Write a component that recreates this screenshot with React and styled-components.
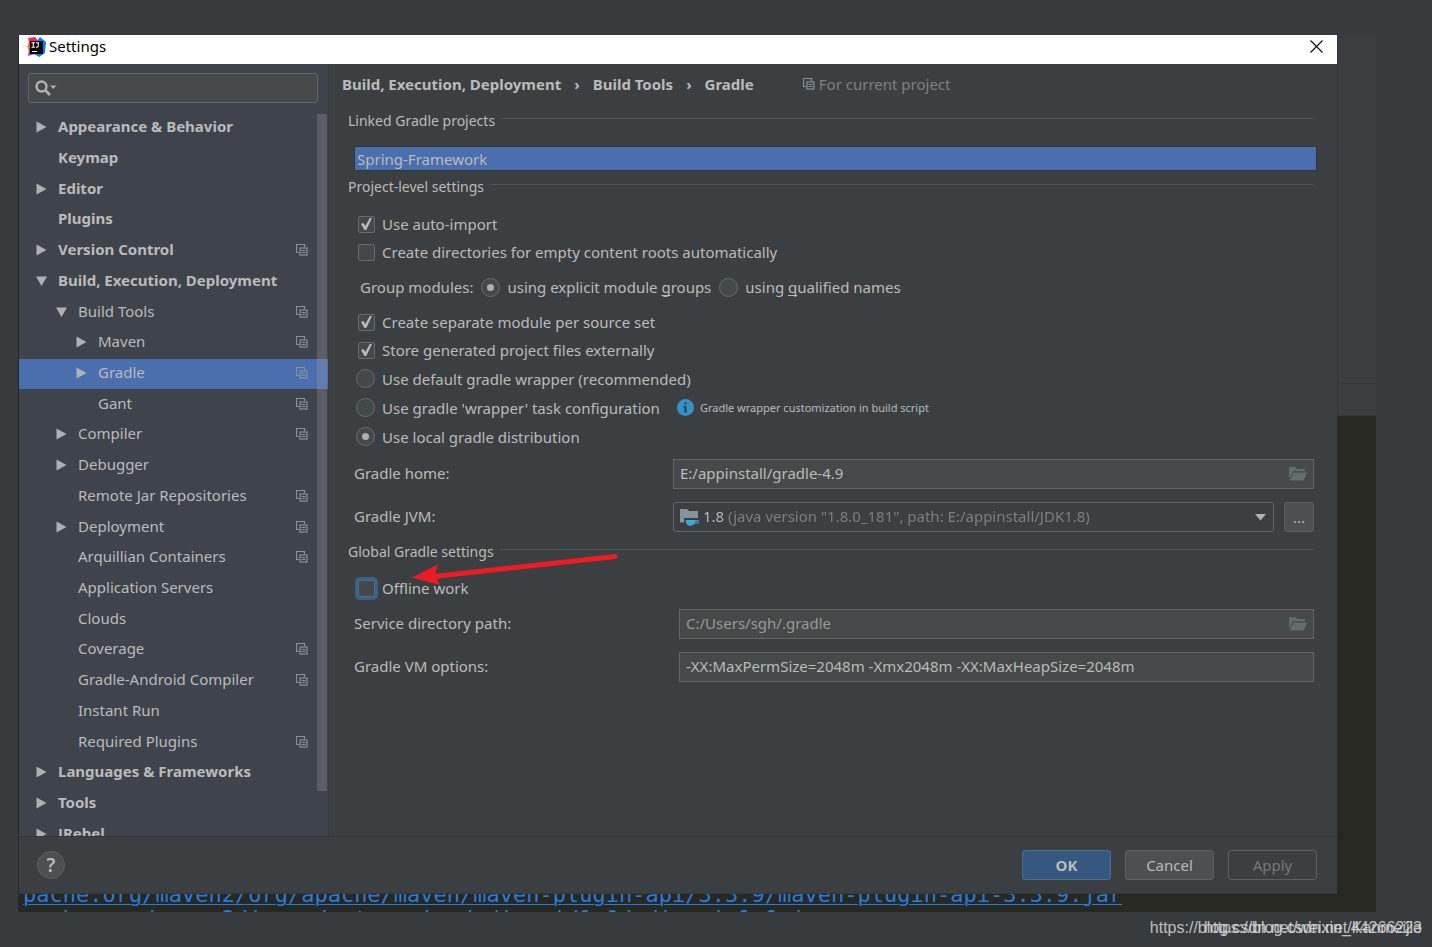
import { useState } from 'react'
import styled, { createGlobalStyle, css } from 'styled-components'

const GlobalStyle = createGlobalStyle`
  * {
    box-sizing: border-box;
  }

  body {
    margin: 0;
    background: #373b3e;
    color: #bbbbbb;
    font-family: 'Noto Sans', 'Open Sans', sans-serif;
    font-size: 15px;
    line-height: 20px;
  }

  button,
  input,
  select {
    font: inherit;
    color: inherit;
    margin: 0;
  }
`

const Desktop = styled.div`
  display: grid;
  grid-template-rows: minmax(0, 1fr) 35px;
  height: 100vh;
  padding: 35px 0 0 18px;
  overflow: hidden;
`

const Screen = styled.div`
  display: grid;
  grid-template-columns: minmax(0, 1fr) 39px;
  grid-template-rows: minmax(0, 1fr) 18px;
  margin-right: 56px;
  background: #272822;
`

const EditorStrip = styled.div`
  display: flex;
  flex-direction: column;
`

const StripPanel = styled.div`
  height: ${(props) => props.$height};
  background: #3c3f41;
  border-left: 1px solid #333537;
  border-bottom: 1px solid #353637;
`

const CodeView = styled.div`
  grid-column: 1 / -1;
  overflow: hidden;
`

const CodeLines = styled.div`
  margin-top: -11px;
  padding-left: 5px;
  font-family: 'DejaVu Sans Mono', monospace;
  font-size: 22px;
  line-height: 24px;
  white-space: pre;
`

const CodeLink = styled.a`
  display: block;
  color: #287bde;
  text-decoration: underline;
  text-decoration-thickness: 1px;
  text-underline-offset: 2px;
`

const Watermark = styled.div`
  display: grid;
  justify-items: end;
  align-items: center;
  padding: 0 10px 3px 0;
  font-family: 'Liberation Sans', Arial, sans-serif;
  font-size: 16px;
  color: rgba(225, 225, 225, 0.8);

  span {
    grid-area: 1 / 1;
  }
`

/* dialog */

const Dialog = styled.div`
  display: flex;
  flex-direction: column;
  margin-left: 1px;
  background: #3c3f41;
  border-bottom: 1px solid #343638;
`

const TitleBar = styled.header`
  display: flex;
  align-items: center;
  flex: 0 0 29px;
  padding: 0 14px 6px 8px;
  gap: 3px;
  background: #ffffff;
  color: #000000;
`

const Title = styled.h1`
  flex: 1;
  margin: 0;
  padding-bottom: 2px;
  font-size: 15px;
  font-weight: 400;
`

const CloseButton = styled.button`
  display: flex;
  padding: 0;
  border: 0;
  background: none;
`

const Body = styled.div`
  display: grid;
  grid-template-columns: 310px minmax(0, 1fr);
  flex: 1;
  min-height: 0;
`

const Sidebar = styled.aside`
  position: relative;
  display: flex;
  flex-direction: column;
  min-height: 0;
  background: #3f434c;
  border-right: 1px solid #37393c;
`

const SearchBox = styled.label`
  display: flex;
  align-items: center;
  flex: 0 0 30px;
  margin: 9px 10px 10px 9px;
  padding: 0 6px;
  background: #45494a;
  border: 1px solid #646464;
  border-radius: 3px;

  input {
    flex: 1;
    min-width: 0;
    border: 0;
    outline: 0;
    background: none;
  }
`

const TreeViewport = styled.div`
  flex: 1;
  min-height: 0;
  overflow: hidden;
`

const Tree = styled.ul`
  display: grid;
  grid-auto-rows: 1fr;
  height: calc(100% + 14px);
  margin: 0;
  padding: 0;
  list-style: none;
`

const TreeItem = styled.li`
  display: flex;
  align-items: center;
  padding: 0 20px 2px ${(props) => 17 + props.$level * 20}px;
  cursor: default;

  ${(props) =>
    props.$level === 0 &&
    css`
      font-weight: 700;
    `}

  ${(props) =>
    props.$selected &&
    css`
      background: #4b6eaf;
    `}
`

const Twisty = styled.span`
  display: flex;
  flex: 0 0 22px;
`

const TreeLabel = styled.span`
  flex: 1;
  padding-bottom: 2px;
  white-space: nowrap;
`

const ScrollThumb = styled.div`
  position: absolute;
  top: 50px;
  right: 1px;
  bottom: 45px;
  width: 10px;
  background: rgba(166, 166, 166, 0.28);
`

const Content = styled.main`
  padding: 0 23px 0 19px;
`

const Crumbs = styled.nav`
  display: flex;
  align-items: center;
  gap: 13px;
  height: 40px;
  margin-left: -6px;
  font-weight: 700;
`

const ScopeNote = styled.span`
  display: flex;
  align-items: center;
  gap: 4px;
  margin-left: 36px;
  color: #808080;
  font-weight: 400;
`

const SectionTitle = styled.h2`
  display: flex;
  align-items: center;
  gap: 6px;
  height: 22px;
  margin: ${(props) => props.$top}px 0 0;
  font-size: 14px;
  font-weight: 400;
  white-space: nowrap;

  &::after {
    content: '';
    flex: 1;
    height: 1px;
    margin-bottom: 5px;
    background: #515354;
  }
`

const ProjectList = styled.ul`
  margin: 14px -3px 0 6px;
  padding: 0;
  list-style: none;
  border: 1px solid #323435;

  li {
    height: 23px;
    padding: 0 2px;
    line-height: 24px;
    background: #4b6eaf;
  }
`

const OptionGroup = styled.div`
  margin-top: ${(props) => props.$top}px;
  padding-left: ${(props) => (props.$indent ? 12 : 8)}px;
`

const OptionRow = styled.div`
  position: relative;
  display: flex;
  align-items: center;
  height: ${(props) => props.$height || 28}px;
`

const Option = styled.label`
  display: flex;
  align-items: center;
  gap: 7px;

  u {
    text-underline-offset: 2px;
    text-decoration-skip-ink: none;
  }
`

const Check = styled.input.attrs({ type: 'checkbox' })`
  appearance: none;
  display: grid;
  place-items: center;
  width: 17px;
  height: 17px;
  margin: 0 0 0 2px;
  border: 1px solid #6b6b6b;
  border-radius: 2px;
  background: #43494a;
  outline: 0;

  &:checked::before {
    content: '';
    width: 11px;
    height: 12px;
    background: #bbbbbb;
    clip-path: polygon(0 50%, 22% 42%, 40% 66%, 80% 0, 100% 0, 48% 100%, 32% 100%);
  }

  ${(props) =>
    props.$ringed &&
    css`
      border-color: #466d94;
      box-shadow: 0 0 0 3px #3d6185;
    `}
`

const Radio = styled.input.attrs({ type: 'radio' })`
  appearance: none;
  display: grid;
  place-items: center;
  width: 19px;
  height: 19px;
  border: 1px solid #6b6b6b;
  border-radius: 50%;
  background: #43494a;

  &:checked::before {
    content: '';
    width: 7px;
    height: 7px;
    border-radius: 50%;
    background: #aeb0b1;
  }
`

const GroupLabel = styled.span`
  margin-right: 8px;
`

const InfoNote = styled.span`
  display: flex;
  align-items: center;
  gap: 6px;
  margin-left: 17px;
  font-size: 11px;
`

const Form = styled.div`
  display: grid;
  grid-template-columns: ${(props) => props.$labelWidth}px minmax(0, 1fr);
  align-items: center;
  row-gap: 13px;
  margin-top: ${(props) => props.$top}px;
  padding-left: 6px;

  label {
    padding-bottom: 2px;
  }
`

const Field = styled.div`
  display: flex;
  align-items: center;
  height: 30px;
  padding: 0 6px;
  background: #45494a;
  border: 1px solid #646464;

  input {
    flex: 1;
    min-width: 0;
    height: 26px;
    padding: 0 0 2px;
    border: 0;
    outline: 0;
    background: none;
    color: ${(props) => (props.$muted ? '#999999' : '#bbbbbb')};
  }
`

const IconButton = styled.button`
  display: flex;
  padding: 0;
  border: 0;
  background: none;
`

const JvmRow = styled.div`
  display: flex;
  gap: 10px;
`

const SelectBox = styled.div`
  display: flex;
  align-items: center;
  flex: 1;
  min-width: 0;
  height: 30px;
  padding: 0 7px 0 6px;
  border: 1px solid #646464;
  border-radius: 3px;
`

/* version in the text colour, the details after it in grey */
const JvmSelect = styled.select`
  appearance: none;
  flex: 1;
  min-width: 0;
  height: 26px;
  padding: 0 0 2px 4px;
  border: 0;
  outline: 0;
  background: linear-gradient(90deg, #bbbbbb 27px, #808080 27px);
  background-clip: text;
  -webkit-text-fill-color: transparent;
`

const PushButton = styled.button`
  width: ${(props) => (props.$square ? 30 : 89)}px;
  height: 30px;
  padding: 0;
  border: 1px solid #5e6060;
  border-radius: 3px;
  background: #4c5052;

  ${(props) =>
    props.$primary &&
    css`
      background: #365880;
      border-color: #4c708c;
      font-weight: 700;
    `}

  &:disabled {
    background: none;
    color: #777777;
  }
`

const Footer = styled.footer`
  display: flex;
  align-items: center;
  gap: 14px;
  flex: 0 0 57px;
  padding: 0 20px 0 18px;
  border-top: 1px solid #333537;
`

const HelpButton = styled.button`
  width: 28px;
  height: 28px;
  margin-right: auto;
  padding: 0;
  border: 1px solid #5e6060;
  border-radius: 50%;
  background: #4c5052;
  font-size: 19px;
  font-weight: 600;
`

const Arrow = styled.svg`
  position: absolute;
  left: 56px;
  top: -24px;
  pointer-events: none;
`

const IdeaLogo = () => (
  <svg width="19" height="20" viewBox="0 0 19 20" aria-hidden="true">
    <path d="M1 1 L8 0 L12 5 L9 12 L1 9 L2 5 Z" fill="#fe2857" />
    <path d="M0 9 L5 8 L6 13 L2 14 Z" fill="#f6871f" />
    <path d="M2 11 L8 12 L8 17 L1 19 Z" fill="#a0489b" />
    <path d="M13 0 L19 5 L18 16 L12 20 L7 17 L9 5 Z" fill="#087cfa" />
    <rect x="3" y="4" width="13" height="13" fill="#080808" />
    <path
      d="M4.5 5.7H8M6.25 5.7V10.3M4.5 10.3H8M9 5.7H12M11.2 5.7V9.2Q11.2 10.3 9 10.2"
      fill="none"
      stroke="#fff"
      strokeWidth="1.1"
    />
    <rect x="5" y="14" width="5" height="1" fill="#fff" />
  </svg>
)

const CloseIcon = () => (
  <svg width="13" height="13" viewBox="0 0 13 13" stroke="#111" strokeWidth="1.2">
    <path d="M0.5 0.5 L12.5 12.5 M12.5 0.5 L0.5 12.5" />
  </svg>
)

const SearchIcon = () => (
  <svg width="22" height="16" viewBox="0 0 22 16" aria-hidden="true">
    <circle cx="6.5" cy="6.5" r="5" fill="none" stroke="#afb1b3" strokeWidth="2.4" />
    <path d="M10 10 L15 15" stroke="#afb1b3" strokeWidth="2.6" />
    <path d="M15 5.5 H21.5 L18.2 9 Z" fill="#afb1b3" />
  </svg>
)

const ArrowIcon = ({ open }) => (
  <svg width="11" height="12" viewBox="0 0 11 12" aria-hidden="true">
    <path d={open ? 'M0 1.5 H11 L5.5 11 Z' : 'M0.5 0.5 L10.5 6 L0.5 11.5 Z'} fill="#b0b0b0" />
  </svg>
)

const CopyIcon = () => (
  <svg width="12" height="12" viewBox="0 0 12 12" fill="none" stroke="#87939a" aria-hidden="true">
    <path d="M3 8.5 H0.5 V0.5 H8.5 V3" strokeWidth="1.2" />
    <rect x="4" y="4" width="7" height="7" strokeWidth="1.2" />
    <path d="M5.5 6.5 H9.5 M5.5 8.5 H9.5" />
  </svg>
)

const FolderIcon = () => (
  <svg width="18" height="14" viewBox="0 0 18 14" fill="#636c71" aria-hidden="true">
    <path d="M0 0 H6 L8 2 H16 V4.2 H4 L0 12 Z" />
    <path d="M4.4 5.4 H18 L14.6 13.6 H0.6 Z" />
  </svg>
)

const JdkIcon = () => (
  <svg width="19" height="18" viewBox="0 0 19 18" aria-hidden="true">
    <path d="M0 1 H7 L9 3 H18 V10 H4 V14.5 H0 Z" fill="#87939a" />
    <path
      d="M5.5 12 H18.6 V15.5 H14.8 Q13.5 17.8 10 17.8 Q6 17.8 5.5 12 Z M15.2 13.2 V14.4 H17.4 V13.2 Z"
      fill="#3fa9d6"
      fillRule="evenodd"
    />
  </svg>
)

const InfoIcon = () => (
  <svg width="17" height="17" viewBox="0 0 17 17" aria-hidden="true">
    <circle cx="8.5" cy="8.5" r="8.5" fill="#3592c4" />
    <rect x="7.5" y="3.5" width="2" height="2" fill="#233f50" />
    <path d="M6.5 7 H9.5 V13.5 H7.5 V8.5 H6.5 Z" fill="#233f50" />
  </svg>
)

const nodes = [
  { label: 'Appearance & Behavior', level: 0, arrow: 'closed' },
  { label: 'Keymap', level: 0 },
  { label: 'Editor', level: 0, arrow: 'closed' },
  { label: 'Plugins', level: 0 },
  { label: 'Version Control', level: 0, arrow: 'closed', project: true },
  { label: 'Build, Execution, Deployment', level: 0, arrow: 'open' },
  { label: 'Build Tools', level: 1, arrow: 'open', project: true },
  { label: 'Maven', level: 2, arrow: 'closed', project: true },
  { label: 'Gradle', level: 2, arrow: 'closed', project: true },
  { label: 'Gant', level: 2, project: true },
  { label: 'Compiler', level: 1, arrow: 'closed', project: true },
  { label: 'Debugger', level: 1, arrow: 'closed' },
  { label: 'Remote Jar Repositories', level: 1, project: true },
  { label: 'Deployment', level: 1, arrow: 'closed', project: true },
  { label: 'Arquillian Containers', level: 1, project: true },
  { label: 'Application Servers', level: 1 },
  { label: 'Clouds', level: 1 },
  { label: 'Coverage', level: 1, project: true },
  { label: 'Gradle-Android Compiler', level: 1, project: true },
  { label: 'Instant Run', level: 1 },
  { label: 'Required Plugins', level: 1, project: true },
  { label: 'Languages & Frameworks', level: 0, arrow: 'closed' },
  { label: 'Tools', level: 0, arrow: 'closed' },
  { label: 'JRebel', level: 0, arrow: 'closed' },
]

const SettingsTree = () => {
  const [selected, setSelected] = useState('Gradle')

  return (
    <TreeViewport>
      <Tree>
        {nodes.map((node) => (
          <TreeItem
            key={node.label}
            $level={node.level}
            $selected={node.label === selected}
            onClick={() => setSelected(node.label)}
          >
            <Twisty>{node.arrow && <ArrowIcon open={node.arrow === 'open'} />}</Twisty>
            <TreeLabel>{node.label}</TreeLabel>
            {node.project && <CopyIcon />}
          </TreeItem>
        ))}
      </Tree>
    </TreeViewport>
  )
}

const GradleSettings = () => (
  <Content>
    <Crumbs>
      <span>Build, Execution, Deployment</span>
      <span>›</span>
      <span>Build Tools</span>
      <span>›</span>
      <span>Gradle</span>
      <ScopeNote>
        <CopyIcon />
        For current project
      </ScopeNote>
    </Crumbs>

    <SectionTitle $top={6}>Linked Gradle projects</SectionTitle>
    <ProjectList>
      <li>Spring-Framework</li>
    </ProjectList>

    <SectionTitle $top={5}>Project-level settings</SectionTitle>
    <OptionGroup $top={12}>
      <OptionRow>
        <Option>
          <Check defaultChecked />
          Use auto-import
        </Option>
      </OptionRow>
      <OptionRow>
        <Option>
          <Check />
          Create directories for empty content roots automatically
        </Option>
      </OptionRow>
    </OptionGroup>
    <OptionGroup $top={7} $indent>
      <OptionRow>
        <GroupLabel>Group modules:</GroupLabel>
        <Option>
          <Radio name="modules" defaultChecked />
          <span>
            using explicit module <u>g</u>roups
          </span>
        </Option>
        <GroupLabel />
        <Option>
          <Radio name="modules" />
          <span>
            using <u>q</u>ualified names
          </span>
        </Option>
      </OptionRow>
    </OptionGroup>
    <OptionGroup $top={7}>
      <OptionRow>
        <Option>
          <Check defaultChecked />
          Create separate module per source set
        </Option>
      </OptionRow>
      <OptionRow>
        <Option>
          <Check defaultChecked />
          Store generated project files externally
        </Option>
      </OptionRow>
      <OptionRow $height={29}>
        <Option>
          <Radio name="distribution" />
          Use default gradle wrapper (recommended)
        </Option>
      </OptionRow>
      <OptionRow $height={29}>
        <Option>
          <Radio name="distribution" />
          Use gradle 'wrapper' task configuration
        </Option>
        <InfoNote>
          <InfoIcon />
          Gradle wrapper customization in build script
        </InfoNote>
      </OptionRow>
      <OptionRow $height={29}>
        <Option>
          <Radio name="distribution" defaultChecked />
          Use local gradle distribution
        </Option>
      </OptionRow>
    </OptionGroup>

    <Form $top={8} $labelWidth={319}>
      <label htmlFor="home">Gradle home:</label>
      <Field>
        <input id="home" defaultValue="E:/appinstall/gradle-4.9" />
        <IconButton aria-label="Browse Gradle home">
          <FolderIcon />
        </IconButton>
      </Field>
      <label htmlFor="jvm">Gradle JVM:</label>
      <JvmRow>
        <SelectBox>
          <JdkIcon />
          <JvmSelect id="jvm">
            <option>1.8 (java version "1.8.0_181", path: E:/appinstall/JDK1.8)</option>
          </JvmSelect>
          <svg width="11" height="7" viewBox="0 0 11 7" fill="#afb1b3" aria-hidden="true">
            <path d="M0 0 H11 L5.5 6.5 Z" />
          </svg>
        </SelectBox>
        <PushButton $square>...</PushButton>
      </JvmRow>
    </Form>

    <SectionTitle $top={9}>Global Gradle settings</SectionTitle>
    <OptionGroup $top={11}>
      <OptionRow>
        <Option>
          <Check $ringed />
          Offline work
        </Option>
        <Arrow width="210" height="42" viewBox="0 0 210 42" aria-hidden="true">
          <path d="M203 6.5 L22 26.5" stroke="#ed1c24" strokeWidth="5" strokeLinecap="round" />
          <path d="M0 27.5 L26 14.5 L23 25.5 L28 35 Z" fill="#ed1c24" />
        </Arrow>
      </OptionRow>
    </OptionGroup>
    <Form $top={7} $labelWidth={325}>
      <label htmlFor="service">Service directory path:</label>
      <Field $muted>
        <input id="service" defaultValue="C:/Users/sgh/.gradle" />
        <IconButton aria-label="Browse service directory">
          <FolderIcon />
        </IconButton>
      </Field>
      <label htmlFor="vm">Gradle VM options:</label>
      <Field>
        <input id="vm" defaultValue="-XX:MaxPermSize=2048m -Xmx2048m -XX:MaxHeapSize=2048m" />
      </Field>
    </Form>
  </Content>
)

const App = () => (
  <>
    <GlobalStyle />
    <Desktop>
      <Screen>
        <Dialog role="dialog" aria-label="Settings">
          <TitleBar>
            <IdeaLogo />
            <Title>Settings</Title>
            <CloseButton aria-label="Close">
              <CloseIcon />
            </CloseButton>
          </TitleBar>
          <Body>
            <Sidebar>
              <SearchBox>
                <SearchIcon />
                <input aria-label="Search settings" />
              </SearchBox>
              <SettingsTree />
              <ScrollThumb />
            </Sidebar>
            <GradleSettings />
          </Body>
          <Footer>
            <HelpButton aria-label="Help">?</HelpButton>
            <PushButton $primary>OK</PushButton>
            <PushButton>Cancel</PushButton>
            <PushButton disabled>Apply</PushButton>
          </Footer>
        </Dialog>
        <EditorStrip>
          <StripPanel $height="349px" />
          <StripPanel $height="32px" />
        </EditorStrip>
        <CodeView>
          <CodeLines>
            <CodeLink href="#plugin-api">
              pache.org/maven2/org/apache/maven/maven-plugin-api/3.3.9/maven-plugin-api-3.3.9.jar
            </CodeLink>
            <CodeLink href="#cdi-api">
              pache.org/maven2/javax/enterprise/cdi-api/1.0/cdi-api-1.0.jar
            </CodeLink>
          </CodeLines>
        </CodeView>
      </Screen>
      <Watermark>
        <span>https://blog.csdn.net/weixin_44266223</span>
        <span>https://blog.csdn.net/Kanmeijie</span>
      </Watermark>
    </Desktop>
  </>
)

export default App
